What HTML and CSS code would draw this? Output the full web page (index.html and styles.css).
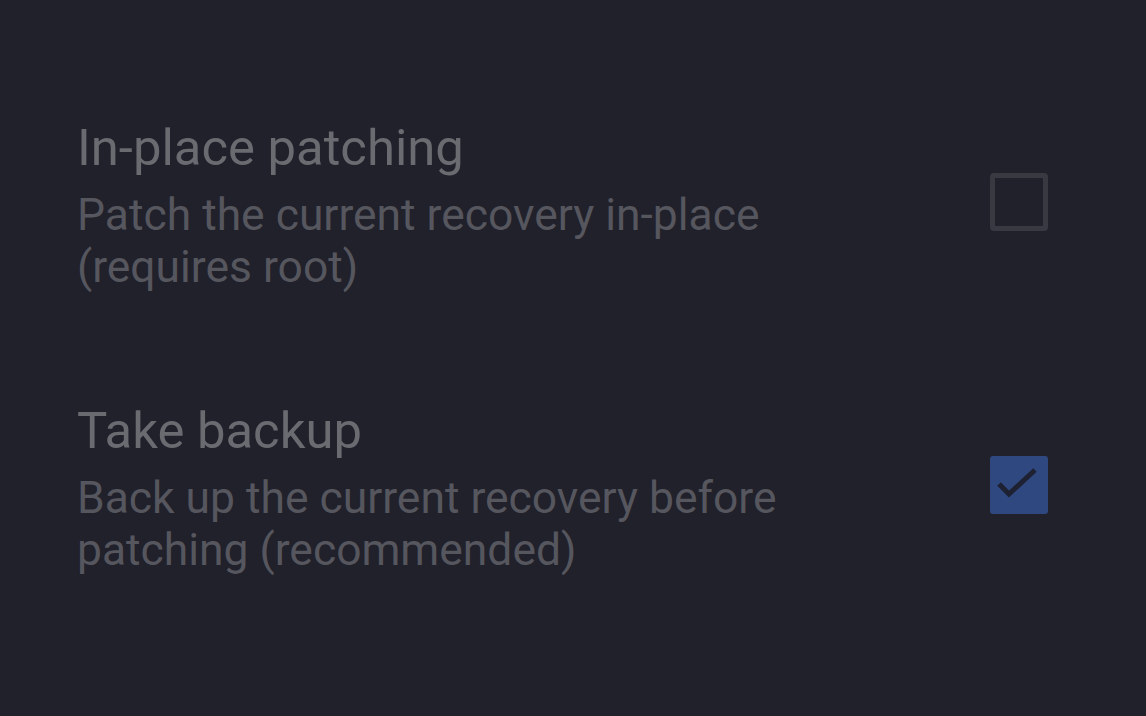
FILE: index.html
```html
<!DOCTYPE html>
<html>
<head>
<meta charset="utf-8">
<link rel="stylesheet" href="styles.css">
</head>
<body>
<div class="screen">
  <div class="option">
    <div class="text">
      <div class="title">In-place patching</div>
      <div class="desc">Patch the current recovery in-place<br>(requires root)</div>
    </div>
    <div class="check"></div>
  </div>
  <div class="option">
    <div class="text">
      <div class="title">Take backup</div>
      <div class="desc">Back up the current recovery before<br>patching (recommended)</div>
    </div>
    <div class="check checked">
      <svg viewBox="0 0 58 58" width="58" height="58"><path d="M9 28 L19 38 L45 14" fill="none" stroke="#1e2131" stroke-width="5"/></svg>
    </div>
  </div>
</div>
</body>
</html>
```
FILE: styles.css
```css
html, body { margin: 0; padding: 0; }
body {
  background: #21212b;
  width: 1146px;
  height: 716px;
  overflow: hidden;
  font-family: Roboto, "Noto Sans", sans-serif;
}
.screen {
  display: flex;
  flex-direction: column;
  padding: 118px 98px 0 77px;
  gap: 108px;
}
.option {
  display: flex;
  align-items: center;
  justify-content: space-between;
}
.text { display: flex; flex-direction: column; }
.title {
  font-size: 50.8px;
  line-height: 60px;
  color: #6a6a71;
}
.desc {
  font-size: 44.4px;
  line-height: 52px;
  color: #56565e;
  margin-top: 11px;
}
.check {
  box-sizing: border-box;
  width: 58px;
  height: 58px;
  border: 5px solid #393942;
  border-radius: 4px;
  margin-top: -8px;
}
.check.checked {
  border: none;
  background: #2f4880;
  border-radius: 3px;
}
.check svg { display: block; }
```
